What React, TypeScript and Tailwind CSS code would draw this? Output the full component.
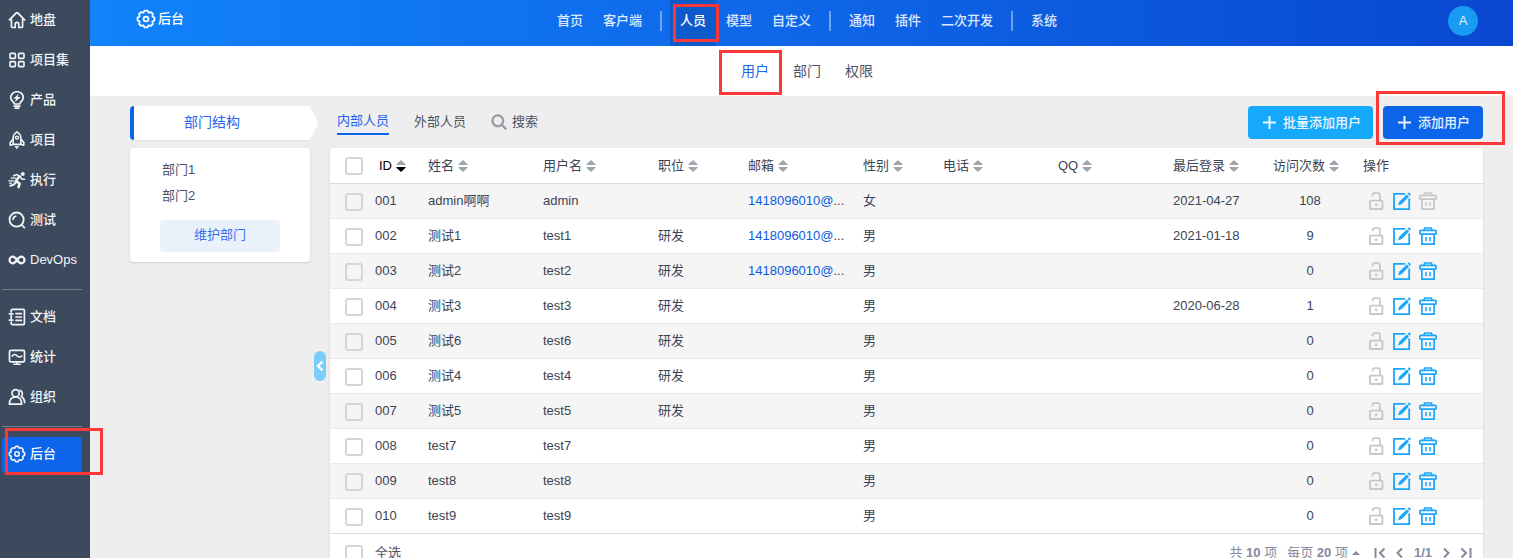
import { useState } from 'react'
import type { ReactNode } from 'react'

type IconProps = { className?: string }

interface User {
  id: string
  name: string
  account: string
  role?: string
  email?: string
  gender: string
  lastLogin?: string
  visits: number
  /** The super admin can't be removed. */
  locked?: boolean
}

const USERS: User[] = [
  { id: '001', name: 'admin啊啊', account: 'admin', email: '1418096010@qq.com', gender: '女', lastLogin: '2021-04-27', visits: 108, locked: true },
  { id: '002', name: '测试1', account: 'test1', role: '研发', email: '1418096010@qq.com', gender: '男', lastLogin: '2021-01-18', visits: 9 },
  { id: '003', name: '测试2', account: 'test2', role: '研发', email: '1418096010@qq.com', gender: '男', visits: 0 },
  { id: '004', name: '测试3', account: 'test3', role: '研发', gender: '男', lastLogin: '2020-06-28', visits: 1 },
  { id: '005', name: '测试6', account: 'test6', role: '研发', gender: '男', visits: 0 },
  { id: '006', name: '测试4', account: 'test4', role: '研发', gender: '男', visits: 0 },
  { id: '007', name: '测试5', account: 'test5', role: '研发', gender: '男', visits: 0 },
  { id: '008', name: 'test7', account: 'test7', gender: '男', visits: 0 },
  { id: '009', name: 'test8', account: 'test8', gender: '男', visits: 0 },
  { id: '010', name: 'test9', account: 'test9', gender: '男', visits: 0 },
]

const COLUMNS = [
  { label: '姓名', width: 'w-[115px]' },
  { label: '用户名', width: 'w-[115px]' },
  { label: '职位', width: 'w-[90px]' },
  { label: '邮箱', width: 'w-[115px]' },
  { label: '性别', width: 'w-[80px]' },
  { label: '电话', width: 'w-[115px]' },
  { label: 'QQ', width: 'w-[115px]' },
  { label: '最后登录', width: 'w-[100px]' },
  { label: '访问次数', width: 'w-[90px]' },
]

function Svg({ className, children }: IconProps & { children: ReactNode }) {
  return (
    <svg
      viewBox="0 0 18 18"
      fill="none"
      stroke="currentColor"
      strokeWidth="1.6"
      strokeLinecap="round"
      strokeLinejoin="round"
      aria-hidden="true"
      className={className ?? 'size-[18px] shrink-0'}
    >
      {children}
    </svg>
  )
}

const HomeIcon = () => (
  <Svg>
    <path d="M1.500 8.800 8 2.200c.6-.6 1.400-.6 2 0l6.500 6.600" strokeWidth="1.900" />
    <path d="M3.400 8.400v7.200c0 .6.300.9.900.9h2.900v-3.300c0-2.400 3.600-2.400 3.600 0v3.300h2.900c.6 0 .9-.3.900-.9V8.400" strokeWidth="1.700" />
  </Svg>
)

const GridIcon = () => (
  <Svg>
    <rect x="2" y="2.400" width="5.400" height="5" rx="0.800" />
    <rect x="10.600" y="2.400" width="5.400" height="5" rx="0.800" />
    <rect x="2" y="10.600" width="5.400" height="5" rx="0.800" />
    <rect x="10.600" y="10.600" width="5.400" height="5" rx="0.800" />
  </Svg>
)

const BulbIcon = () => (
  <Svg>
    <path d="M6.400 13c0-1.800-3.700-2.800-3.700-6.400a6.300 5.900 0 0 1 12.600 0c0 3.600-3.700 4.600-3.700 6.400z" strokeWidth="1.700" />
    <path d="M6.200 15.200h5.600M7.200 17.200h3.600" strokeWidth="1.700" />
    <path d="M10.800 2.800 5.200 7.800h2.900l-1.300 3.400 6-5.200H9.700z" fill="currentColor" stroke="none" />
  </Svg>
)

const RocketIcon = () => (
  <Svg>
    <path d="M5.200 13.400V6.400C5.500 4 7 2 9 0.900c2 1.100 3.500 3.100 3.800 5.500v7z" />
    <path d="M5 8.400 2.200 11.400v2.800L5 13.400M13 8.400l2.800 3v2.800l-2.800-.8" />
    <circle cx="9" cy="6.600" r="1.500" strokeWidth="1.400" />
    <path d="M7.400 15.400h3.200L9 17.600z" fill="currentColor" strokeWidth="0.800" />
  </Svg>
)

const RunIcon = () => (
  <Svg>
    <circle cx="14.800" cy="3" r="2" fill="currentColor" stroke="none" />
    <path d="M5.600 4.800 9 3.600l3.200 1.800 1.600 2.800h2.800" strokeWidth="1.600" />
    <path d="m11.200 5.600-3.400 4.600 3.800 2.400-1 3.600" strokeWidth="2.600" />
    <path d="M8 10.800 5.800 13.600 2.400 14.800" strokeWidth="2" />
    <path d="M3.200 7.200h4.200M.8 9.800h4.800M1.600 12.200h2" strokeWidth="1.300" />
  </Svg>
)

const LensIcon = () => (
  <Svg>
    <circle cx="8.600" cy="8.600" r="7.100" strokeWidth="1.800" />
    <path d="m13.600 13.800 2.800 2.800M5 8.400a3.600 3.600 0 0 1 2.600-3.200" strokeWidth="1.700" />
  </Svg>
)

const InfinityIcon = () => (
  <Svg>
    <path
      d="M9 9C7.400 6.800 6.400 5.700 4.800 5.700a3.300 3.300 0 0 0 0 6.600C6.400 12.300 7.400 11.200 9 9s2.600-3.300 4.200-3.300a3.300 3.300 0 0 1 0 6.600C11.600 12.300 10.600 11.200 9 9Z"
      strokeWidth="2.200"
    />
  </Svg>
)

const DocIcon = () => (
  <Svg>
    <path d="M3.200 4V2.600c0-.7.500-1.200 1.200-1.200h10.800c.7 0 1.200.5 1.200 1.200v12.800c0 .7-.5 1.200-1.200 1.200H4.400c-.7 0-1.200-.5-1.200-1.200V14M3.200 7.600v2.800" strokeWidth="1.700" />
    <path d="M1.400 5.800h3.400M1.400 12.200h3.400M8 5.600h5.400M8 9h5.400M8 12.400h5.400" strokeWidth="1.700" />
  </Svg>
)

const ChartIcon = () => (
  <Svg>
    <rect x="1.500" y="2.400" width="15" height="11.400" rx="1.400" strokeWidth="1.700" />
    <path d="M4.200 8.200c1.400-2.200 3-2 4.800-.4s3.400 1.600 4.800.2" />
    <path d="M5.800 16.200h6.400M9 14v2" />
  </Svg>
)

const PeopleIcon = () => (
  <Svg>
    <circle cx="7.600" cy="5.200" r="3.600" strokeWidth="1.700" />
    <path d="M1.400 16.200c0-4.400 2.400-7.200 6.200-7.200s6 2.800 6 7.200z" strokeWidth="1.700" />
    <path d="M12 2.400a3.500 3.500 0 0 1 1.200 6c2.200 1.200 3.400 3.200 3.400 6.200" strokeWidth="1.700" />
  </Svg>
)

const GearIcon = ({ className }: IconProps) => (
  <Svg className={className}>
    <path d="M7.800 1.400h2.400l1.200 1.900 2.100-.5 1.700 1.700-.5 2.100 1.900 1.200v2.400l-1.900 1.200.5 2.100-1.700 1.700-2.100-.5-1.200 1.900H7.800l-1.200-1.900-2.100.5-1.700-1.700.5-2.100-1.900-1.200V7.800l1.900-1.200-.5-2.100 1.700-1.700 2.100.5z" />
    <circle cx="9" cy="9" r="2.200" />
  </Svg>
)

const UnlockIcon = () => (
  <Svg>
    <rect x="3" y="8.600" width="12.400" height="8.400" rx="0.600" strokeWidth="1.900" />
    <path d="M5.600 4.200V3c0-1.200.7-1.900 1.900-1.900H11c1.200 0 1.900.7 1.900 1.900v5.400" strokeWidth="1.800" strokeLinecap="butt" />
    <circle cx="9.200" cy="12.800" r="1.400" fill="currentColor" stroke="none" />
  </Svg>
)

const EditIcon = () => (
  <Svg>
    <path d="M12.200 1.900H1v15.200h15.200V6.400" strokeWidth="1.800" strokeLinecap="butt" strokeLinejoin="miter" />
    <path d="M5 13.600 6.400 9.600 13.800 2.400l2.200 2.200-7.200 7.400z" fill="currentColor" stroke="none" />
    <path d="m14.600 1.700 1.400-1.400 2 2-1.400 1.500z" fill="currentColor" stroke="none" />
  </Svg>
)

const TrashIcon = () => (
  <Svg>
    <path d="M5 3.400 5.600 1h6.800l.6 2.400" strokeWidth="1.600" />
    <rect x="0.900" y="3.400" width="16.200" height="3.800" rx="1" strokeWidth="1.700" />
    <path d="M2.900 7.400v9.800h12.200V7.400" strokeWidth="1.700" strokeLinejoin="miter" strokeLinecap="butt" />
    <path d="M7 10v4.200M11 10v4.200" strokeWidth="1.500" strokeLinecap="butt" />
  </Svg>
)

const SortIcon = ({ active }: { active?: boolean }) => (
  <svg viewBox="0 0 10 12" className="mt-0.5 h-3 w-2.5 shrink-0" aria-hidden="true">
    <path d="M5 0 9.600 4.200v.8H.4v-.8z" fill="#a0a6ae" />
    <path d="M5 12 9.600 7.800V7H.4v.8z" fill={active ? '#000' : '#a0a6ae'} />
  </svg>
)

const PlusIcon = () => (
  <svg viewBox="0 0 13 13" className="size-[13px] shrink-0" stroke="currentColor" strokeWidth="2" aria-hidden="true">
    <path d="M6.500 0v13M0 6.500h13" />
  </svg>
)

/** Red frame that calls attention to a step of the guide. */
const Mark = ({ className }: { className: string }) => (
  <span aria-hidden="true" className={`pointer-events-none absolute z-20 border-3 border-[#fb3838] ${className}`} />
)

const SIDE_MENU = [
  [
    { label: '地盘', icon: HomeIcon },
    { label: '项目集', icon: GridIcon },
    { label: '产品', icon: BulbIcon },
    { label: '项目', icon: RocketIcon },
    { label: '执行', icon: RunIcon },
    { label: '测试', icon: LensIcon },
    { label: 'DevOps', icon: InfinityIcon },
  ],
  [
    { label: '文档', icon: DocIcon },
    { label: '统计', icon: ChartIcon },
    { label: '组织', icon: PeopleIcon },
  ],
  [{ label: '后台', icon: GearIcon }],
]

const TOP_MENU = [['首页', '客户端'], ['人员', '模型', '自定义'], ['通知', '插件', '二次开发'], ['系统']]

function Sidebar() {
  return (
    <nav aria-label="主菜单" className="relative z-10 flex w-[90px] shrink-0 flex-col gap-1 bg-[#3d4a5e] pt-[3px] pr-2 pl-0.5">
      {SIDE_MENU.map((group, index) => (
        <div key={index} className="flex flex-col gap-1">
          {index > 0 && <hr className="my-1.5 border-[#737c8a]" />}
          {group.map(({ label, icon: Icon }) => {
            const active = label === '后台'
            return (
              <a
                key={label}
                href="#"
                aria-current={active ? 'page' : undefined}
                className={`relative flex h-9 items-center gap-1 rounded-sm pb-0.5 pl-1.5 text-[13px] font-medium whitespace-nowrap text-[#f2f4f7] ${active ? 'bg-[#0c64eb]' : ''}`}
              >
                <Icon />
                {label}
                {active && <Mark className="-top-[9px] -right-[21px] -bottom-0.5 left-[3px]" />}
              </a>
            )
          })}
        </div>
      ))}
    </nav>
  )
}

function TopBar() {
  return (
    <header className="grid h-[46px] shrink-0 grid-cols-[1fr_auto_1fr] bg-linear-to-r from-[#1183fb] via-[#0f66e8] to-[#0a47d0] pr-[35px] pl-[46px] text-[13px] font-medium text-white/85">
      <a href="#" className="flex items-center gap-0.5 pb-2 text-white">
        <GearIcon className="size-5 shrink-0" />
        后台
      </a>
      <nav aria-label="后台导航" className="flex">
        {TOP_MENU.map((group, index) => (
          <div key={index} className="flex">
            {index > 0 && <span className="mx-2 mt-[11px] h-5 w-0.5 bg-white/40" />}
            {group.map((label) => {
              const active = label === '人员'
              return (
                <a
                  key={label}
                  href="#"
                  className={`relative flex items-center px-2.5 pb-1 ${active ? 'bg-[#0d5acb] text-white' : ''}`}
                >
                  {label}
                  {active && <Mark className="top-1 -right-[3px] bottom-1 left-[3px]" />}
                </a>
              )
            })}
          </div>
        ))}
      </nav>
      <button
        type="button"
        aria-label="用户菜单"
        className="mt-1.5 flex size-[30px] items-center justify-center justify-self-end rounded-full bg-[#189bf3]"
      >
        A
      </button>
    </header>
  )
}

function SubNav() {
  return (
    <nav aria-label="人员" className="flex h-[50px] shrink-0 items-center justify-center gap-6 bg-white pr-[35px] pl-[46px] text-sm text-[#4c5365]">
      <a href="#" aria-current="page" className="relative text-[#2463ee]">
        用户
        <Mark className="-top-[11px] -right-[13px] -bottom-3.5 -left-[22px]" />
      </a>
      <a href="#">部门</a>
      <a href="#">权限</a>
    </nav>
  )
}

function Departments() {
  return (
    <aside className="w-[180px] shrink-0">
      <h2 className="relative mb-2 flex h-[34px] items-center justify-center rounded-l border-l-4 border-[#0c64eb] bg-white pr-5 pb-0.5 text-sm text-[#2463ee] shadow-xs">
        部门结构
        <svg viewBox="0 0 8 34" className="absolute top-0 left-full h-full w-2" fill="#fff" aria-hidden="true">
          <path d="M0 0 8 17 0 34z" />
        </svg>
      </h2>
      <div className="rounded bg-white px-[30px] pt-[9px] pb-2.5 text-[13px] shadow-sm">
        <ul className="pl-0.5 leading-[26px] text-[#4c5365]">
          <li><a href="#">部门1</a></li>
          <li><a href="#">部门2</a></li>
        </ul>
        <button type="button" className="mt-[11px] h-8 w-full rounded bg-[#e9f2fb] pb-0.5 text-[#3a6bef]">
          维护部门
        </button>
      </div>
    </aside>
  )
}

function Toolbar() {
  return (
    <div className="mb-2 flex h-[34px] items-start text-[13px] text-[#4c5365]">
      <div className="flex items-start gap-[25px] pl-[7px]">
        <a href="#" className="h-[29px] border-b-2 border-[#0c64eb] leading-[29px] text-[#2463ee]">内部人员</a>
        <a href="#" className="leading-[31px]">外部人员</a>
        <button type="button" className="flex h-8 items-center gap-[5px]">
          <svg viewBox="0 0 16 16" className="size-4" fill="none" stroke="#979ea6" strokeWidth="2.400" strokeLinecap="round" aria-hidden="true">
            <circle cx="6.800" cy="6.800" r="5.400" />
            <path d="m11 11 3.600 3.600" />
          </svg>
          搜索
        </button>
      </div>
      <div className="ml-auto flex gap-2.5 font-medium text-white/90">
        <button type="button" className="flex h-[33px] items-center gap-[7px] rounded bg-[#16a8fa] pr-3 pl-[15px]">
          <PlusIcon />
          批量添加用户
        </button>
        <button type="button" className="relative flex h-[33px] items-center gap-[7px] rounded bg-[#0c64eb] pr-[13px] pl-[15px]">
          <PlusIcon />
          添加用户
          <Mark className="-top-[15px] -right-[22px] -bottom-1.5 -left-[7px]" />
        </button>
      </div>
    </div>
  )
}

function Check({ label, checked, onChange }: { label: string; checked: boolean; onChange: () => void }) {
  return (
    <input
      type="checkbox"
      aria-label={label}
      checked={checked}
      onChange={onChange}
      className="mt-0.5 size-[18px] shrink-0 appearance-none rounded-[3px] border-2 border-[#d5d5d5] checked:border-[#0c64eb] checked:bg-[#0c64eb]"
    />
  )
}

/** Shows the mailbox name only; the full address is in the link. */
function Email({ address }: { address: string }) {
  const name = address.slice(0, address.indexOf('@') + 1)
  return (
    <>
      <a href={`mailto:${address}`} title={address} className="text-[#0c5ae0]">{name}</a>...
    </>
  )
}

function UserTable() {
  const [selected, setSelected] = useState<string[]>([])
  const allSelected = selected.length === USERS.length

  const toggle = (id: string) =>
    setSelected((ids) => (ids.includes(id) ? ids.filter((other) => other !== id) : [...ids, id]))
  const toggleAll = () => setSelected(allSelected ? [] : USERS.map((user) => user.id))

  return (
    <div className="rounded-t bg-white text-[13px] text-[#3c4353] shadow-sm">
      <table className="w-full table-fixed">
        <thead>
          <tr className="h-[35px] border-b border-[#d8dbde]">
            <th className="w-[90px] p-0 pl-[15px] font-normal">
              <div className="flex items-center">
                <Check label="全选" checked={allSelected} onChange={toggleAll} />
                <button type="button" className="ml-4 flex items-center gap-1 font-medium text-black">
                  ID
                  <SortIcon active />
                </button>
              </div>
            </th>
            {COLUMNS.map((col) => (
              <th key={col.label} className={`${col.width} p-0 pl-2 font-normal`}>
                <button type="button" className="flex items-center gap-1 whitespace-nowrap">
                  {col.label}
                  <SortIcon />
                </button>
              </th>
            ))}
            <th className="p-0 pl-2 text-left font-normal">操作</th>
          </tr>
        </thead>
        <tbody>
          {USERS.map((user) => (
            <tr key={user.id} className="h-[35px] border-b border-[#ebebeb] last:border-[#d8dbde] odd:bg-[#f5f5f5]">
              <td className="p-0 pl-[15px]">
                <div className="flex items-center gap-3">
                  <Check label={user.name} checked={selected.includes(user.id)} onChange={() => toggle(user.id)} />
                  {user.id}
                </div>
              </td>
              <td className="truncate p-0 px-2">{user.name}</td>
              <td className="truncate p-0 px-2">{user.account}</td>
              <td className="truncate p-0 px-2">{user.role}</td>
              <td className="p-0 pl-2 whitespace-nowrap">{user.email && <Email address={user.email} />}</td>
              <td className="p-0 px-2">{user.gender}</td>
              <td />
              <td />
              <td className="p-0 pl-2">{user.lastLogin}</td>
              <td className="p-0 text-center">{user.visits}</td>
              <td className="p-0 pl-3">
                <div className="flex items-center gap-2 text-[#1ba5fb]">
                  <button type="button" aria-label="解锁" disabled className="text-[#c8c8c8]">
                    <UnlockIcon />
                  </button>
                  <button type="button" aria-label="编辑">
                    <EditIcon />
                  </button>
                  <button type="button" aria-label="删除" disabled={user.locked} className="disabled:text-[#c8c8c8]">
                    <TrashIcon />
                  </button>
                </div>
              </td>
            </tr>
          ))}
        </tbody>
      </table>
      <div className="flex h-[38px] items-center pr-[11px] pl-[15px] text-[#838a9d]">
        <label className="flex items-center gap-3 text-[#4c5365]">
          <Check label="全选" checked={allSelected} onChange={toggleAll} />
          全选
        </label>
        <div className="ml-auto flex items-center gap-2.5">
          <span>共 <b>10</b> 项</span>
          <button type="button" className="flex items-center gap-1">
            <span>每页 <b>20</b> 项</span>
            <svg viewBox="0 0 8 4" className="h-1 w-2" fill="currentColor" aria-hidden="true">
              <path d="M4 0l4 4H0z" />
            </svg>
          </button>
          <div className="ml-1 flex items-center gap-2">
            <PageButton label="第一页" path="M1.500 1v10M10.500 1.500 6 6l4.500 4.500" />
            <PageButton label="上一页" path="M8 1.500 3.500 6 8 10.500" />
            <b>1/1</b>
            <PageButton label="下一页" path="M4 1.500 8.500 6 4 10.500" />
            <PageButton label="最后一页" path="M1.500 1.500 6 6l-4.500 4.500M10.500 1v10" />
          </div>
        </div>
      </div>
    </div>
  )
}

function PageButton({ label, path }: { label: string; path: string }) {
  return (
    <button type="button" aria-label={label}>
      <svg viewBox="0 0 12 12" className="size-3" fill="none" stroke="currentColor" strokeWidth="2" aria-hidden="true">
        <path d={path} />
      </svg>
    </button>
  )
}

export default function App() {
  return (
    <div className="flex h-screen overflow-hidden bg-[#eeeeee] font-['Liberation_Sans','Noto_Sans_CJK_SC',sans-serif]">
      <Sidebar />
      <div className="flex min-w-0 flex-1 flex-col">
        <TopBar />
        <SubNav />
        <main className="flex min-h-0 flex-1 pt-2.5 pr-[30px] pl-10">
          <Departments />
          <div className="flex w-5 shrink-0 items-start justify-center">
            <button
              type="button"
              aria-label="收起"
              className="mt-[245px] flex h-[30px] w-3 items-center justify-center rounded-full bg-[#7bcefb] text-white"
            >
              <svg viewBox="0 0 8 12" className="h-3 w-2" fill="none" stroke="currentColor" strokeWidth="2.400" aria-hidden="true">
                <path d="M6.500 1.500 2 6l4.500 4.500" />
              </svg>
            </button>
          </div>
          <section className="min-w-0 flex-1">
            <Toolbar />
            <UserTable />
          </section>
        </main>
      </div>
    </div>
  )
}
